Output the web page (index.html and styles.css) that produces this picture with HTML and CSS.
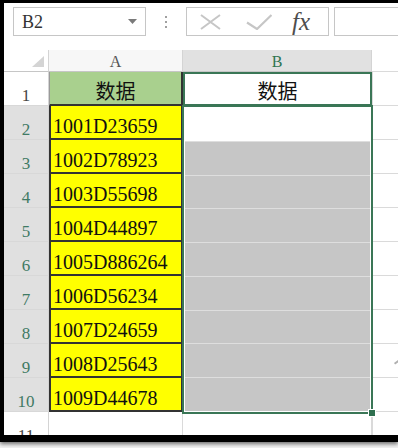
FILE: index.html
```html
<!DOCTYPE html>
<html lang="zh-CN">
<head>
<meta charset="utf-8">
<title>Excel</title>
<link rel="stylesheet" href="styles.css">
</head>
<body>
<div class="window">
  <div class="toolbar">
    <div class="namebox">
      <span class="ref">B2</span>
      <svg class="dd" width="9" height="5" viewBox="0 0 9 5"><path d="M0 0H9L4.5 5Z" fill="#7a7a7a"/></svg>
    </div>
    <div class="grip"><i></i><i></i><i></i></div>
    <div class="fxbox">
      <svg class="ico-x" width="21" height="16" viewBox="0 0 21 16"><path d="M1 1L20 15M20 1L1 15" stroke="#c6c6c6" stroke-width="2" fill="none"/></svg>
      <svg class="ico-check" width="26" height="16" viewBox="0 0 26 16"><path d="M1 8.5L11 15L25.5 1" stroke="#c6c6c6" stroke-width="2.2" fill="none"/></svg>
      <span class="fx">fx</span>
    </div>
    <div class="formula"></div>
  </div>
  <div class="sheet">
    <div class="corner"><svg width="12" height="11" viewBox="0 0 12 11"><path d="M12 0V11H0Z" fill="#d4d4d4"/></svg></div>
    <div class="colhead">A</div>
    <div class="colhead sel">B</div>
    <div class="colhead plain"></div>

    <div class="rowhead">1</div>
    <div class="a head">数据</div>
    <div class="b1">数据</div>
    <div class="c"></div>

    <div class="selrange">
      <div class="cellb active"></div>
      <div class="cellb"></div>
      <div class="cellb"></div>
      <div class="cellb"></div>
      <div class="cellb"></div>
      <div class="cellb"></div>
      <div class="cellb"></div>
      <div class="cellb"></div>
      <div class="cellb"></div>
      <span class="handle"></span>
    </div>

    <div class="rowhead sel">2</div><div class="a">1001D23659</div><div class="c"></div>
    <div class="rowhead sel">3</div><div class="a">1002D78923</div><div class="c"></div>
    <div class="rowhead sel">4</div><div class="a">1003D55698</div><div class="c"></div>
    <div class="rowhead sel">5</div><div class="a">1004D44897</div><div class="c"></div>
    <div class="rowhead sel">6</div><div class="a">1005D886264</div><div class="c"></div>
    <div class="rowhead sel">7</div><div class="a">1006D56234</div><div class="c"></div>
    <div class="rowhead sel">8</div><div class="a">1007D24659</div><div class="c"></div>
    <div class="rowhead sel">9</div><div class="a">1008D25643</div><div class="c mark"></div>
    <div class="rowhead sel">10</div><div class="a">1009D44678</div><div class="c"></div>

    <div class="rowhead">11</div>
    <div class="plain"></div>
    <div class="plain"></div>
    <div class="c"></div>
  </div>
</div>
</body>
</html>
```
FILE: styles.css
```css
* { box-sizing: border-box; margin: 0; padding: 0; }
html, body { width: 398px; height: 448px; overflow: hidden; background: #f2f2f2; }
body { font-family: "Liberation Serif", serif; color: #222; }

.window {
  height: 442px;
  display: flex;
  flex-direction: column;
  background: #fff;
  border-left: 4px solid #000;
  border-top: 3px solid #000;
  border-bottom: 7px solid #000;
  box-shadow: 0 2px 4px rgba(0,0,0,0.55);
  overflow: hidden;
}

.toolbar {
  height: 47px;
  flex: none;
  display: flex;
  align-items: flex-start;
  padding: 4px 0 0 9px;
}
.namebox {
  width: 133px;
  height: 29px;
  border: 1px solid #c6c6c6;
  display: flex;
  align-items: center;
  justify-content: space-between;
  padding: 0 8px;
  font-size: 18px;
  line-height: 1;
  color: #333;
}
.grip {
  width: 40px;
  height: 29px;
  display: flex;
  flex-direction: column;
  align-items: center;
  justify-content: center;
  gap: 3px;
}
.grip i { display: block; width: 2px; height: 2px; background: #a0a0a0; }
.fxbox {
  width: 143px;
  height: 29px;
  border: 1px solid #c6c6c6;
  display: flex;
  align-items: center;
  padding-left: 13px;
}
.ico-check { margin-left: 25px; }
.fx {
  margin-left: 20px;
  font-style: italic;
  font-size: 25px;
  line-height: 1;
  color: #4d4d4d;
}
.formula {
  flex: 1;
  height: 29px;
  margin-left: 5px;
  border: 1px solid #c6c6c6;
  border-right: none;
}

.sheet {
  flex: 1;
  min-height: 0;
  display: grid;
  grid-template-columns: 45px 134px 189px 1fr;
  grid-template-rows: 22px repeat(11, 34px);
  overflow: hidden;
}
.corner {
  background: #fff;
  border-right: 1px solid #d4d4d4;
  border-bottom: 1px solid #c6c6c6;
  display: flex;
  justify-content: flex-end;
  align-items: flex-end;
  padding: 0 4px 4px 0;
}
.colhead {
  display: flex;
  justify-content: center;
  align-items: flex-end;
  font-size: 16px;
  line-height: 1;
  padding-bottom: 1px;
  color: #555;
  background: #f7f7f7;
  border-right: 1px solid #d4d4d4;
  border-bottom: 1px solid #c6c6c6;
}
.colhead.sel { background: #e1e1e1; color: #2f7552; }
.colhead.plain { background: #fff; border-right: none; }

.rowhead {
  display: flex;
  justify-content: center;
  align-items: flex-end;
  font-size: 17px;
  line-height: 1;
  padding-bottom: 1px;
  color: #444;
  background: #fff;
  border-right: 1px solid #d4d4d4;
  border-bottom: 1px solid #d8d8d8;
}
.rowhead.sel { background: #e0e0e0; color: #3f7a64; }

.a {
  background: #ffff00;
  border-left: 2px solid #333;
  border-right: 2px solid #333;
  border-bottom: 2px solid #333;
  display: flex;
  align-items: flex-end;
  padding: 0 0 2px 2px;
  font-size: 20px;
  line-height: 1;
  color: #111;
}
.a.head {
  background: #a9d08e;
  border-left: 1px solid #9a9a9a;
  justify-content: center;
  padding: 0 0 3px 0;
  font-family: "Noto Sans CJK SC", sans-serif;
}
.b1 {
  border: 2px solid #3a7656;
  display: flex;
  justify-content: center;
  align-items: flex-end;
  padding-bottom: 3px;
  font-family: "Noto Sans CJK SC", sans-serif;
  font-size: 20px;
  line-height: 1;
  color: #111;
}
.c {
  border-left: 1px solid #dadada;
  border-bottom: 1px solid #dadada;
}
.c.mark { position: relative; }
.c.mark::after {
  content: "";
  position: absolute;
  left: 21px;
  top: 17px;
  width: 6px;
  height: 2px;
  background: #b0b0b0;
  transform: rotate(-35deg);
}
.plain {
  border-right: 1px solid #dadada;
  border-bottom: 1px solid #dadada;
}

.selrange {
  grid-column: 3;
  grid-row: 3 / span 9;
  margin: -1px -1px -2px -1px;
  border: 2px solid #3a7656;
  background: #fff;
  padding: 1px;
  display: flex;
  flex-direction: column;
  position: relative;
  z-index: 1;
}
.cellb { flex: 1; background: #c6c6c6; border-top: 1px solid #dedede; }
.cellb.active { background: #fff; border-top: none; }
.handle {
  position: absolute;
  right: -5px;
  bottom: -5px;
  width: 8px;
  height: 8px;
  background: #2f6f4f;
  border: 1px solid #fff;
}
```
